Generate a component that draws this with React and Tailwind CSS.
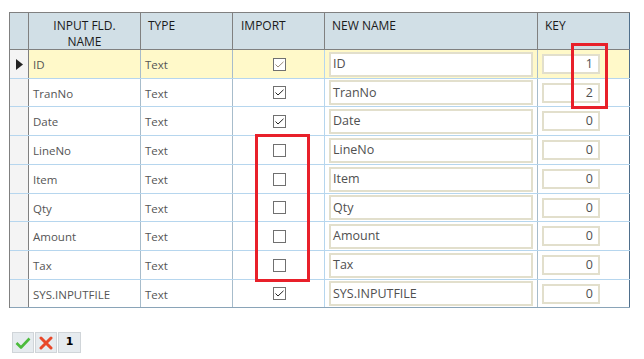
import React from "react";

const rows = [
  { name: "ID", imp: true, key: "1", h: "h-[29px]", sel: true },
  { name: "TranNo", imp: true, key: "2", h: "h-[28px]" },
  { name: "Date", imp: true, key: "0", h: "h-[29px]" },
  { name: "LineNo", imp: false, key: "0", h: "h-[29px]" },
  { name: "Item", imp: false, key: "0", h: "h-[29px]" },
  { name: "Qty", imp: false, key: "0", h: "h-[28px]" },
  { name: "Amount", imp: false, key: "0", h: "h-[29px]" },
  { name: "Tax", imp: false, key: "0", h: "h-[29px]" },
  { name: "SYS.INPUTFILE", imp: true, key: "0", h: "h-[28px]" },
];

function Check({ on, light }) {
  return (
    <div className="w-[13px] h-[13px] border border-[#707070] bg-white flex items-center justify-center">
      {on && (
        <svg width="9" height="7" viewBox="0 0 9 7">
          <path d="M0.5 3.5 L3 6 L8.5 0.8" fill="none" stroke={light ? "#9a8c7a" : "#222"} strokeWidth="1" />
        </svg>
      )}
    </div>
  );
}

export default function App() {
  return (
    <div className="relative w-[644px] h-[359px] bg-white font-['Open_Sans','Noto_Sans',sans-serif] text-[11.5px]">
      <div className="pt-[12px] pl-[9px]">
        <div className="w-[621px] border-l border-[#808080]">
          {/* header */}
          <div className="flex h-[38px] bg-[#d1dfe6] border-t border-b border-[#808080] text-[#1a1a1a] text-[12px] leading-[16px]">
            <div className="w-[19px] border-r border-[#808080]" />
            <div className="w-[112px] border-r border-[#808080] text-center pt-[5px]">INPUT FLD.<br />NAME</div>
            <div className="w-[92px] border-r border-[#808080] pl-[7px] pt-[5px]">TYPE</div>
            <div className="w-[92px] border-r border-[#808080] pl-[8px] pt-[5px]">IMPORT</div>
            <div className="w-[213px] border-r border-[#808080] pl-[7px] pt-[5px]">NEW NAME</div>
            <div className="w-[92px] border-r border-[#4f6f8c] pl-[7px] pt-[5px]">KEY</div>
          </div>
          {rows.map((r, i) => (
            <div
              key={r.name}
              className={`flex ${r.h} border-b ${i === rows.length - 1 ? "border-[#8aa4b8]" : "border-[#b6d6ee]"} ${r.sel ? "bg-[#fff9c9]" : "bg-white"} text-[#555]`}
            >
              <div className="w-[19px] bg-[#f4f4f4] border-r border-[#808080] flex items-center justify-center">
                {r.sel && (
                  <svg width="7" height="11" viewBox="0 0 7 11">
                    <path d="M0 0 L7 5.5 L0 11 Z" fill="#222" />
                  </svg>
                )}
              </div>
              <div className="w-[112px] border-r border-[#a7bccb] flex items-center pl-[4px] pt-[2px]">{r.name}</div>
              <div className="w-[92px] border-r border-[#a7bccb] flex items-center pl-[4px] pt-[2px]">Text</div>
              <div className="w-[92px] border-r border-[#b6d6ee] flex items-center justify-center pl-[1px]">
                <Check on={r.imp} light={r.sel} />
              </div>
              <div className="w-[213px] border-r border-[#a7bccb] flex items-center pl-[4px]">
                <div className="w-[204px] h-[25px] bg-white border-2 border-[#e2dfcc] flex items-center pl-[2px] pt-[1px] text-[12.5px] text-[#505050]">
                  {r.name}
                </div>
              </div>
              <div className="w-[92px] border-r border-[#4f6f8c] flex items-center pl-[4px]">
                <div className="w-[58px] h-[20px] bg-white border-2 border-[#e2dfcc] flex items-center justify-end pr-[5px] pt-[1px] text-[12.5px] text-[#505050]">
                  {r.key}
                </div>
              </div>
            </div>
          ))}
        </div>
      </div>

      {/* footer buttons */}
      <div className="flex gap-[1px] pl-[12px] mt-[24px]">
        <div className="w-[22px] h-[21px] bg-[#e6ebef] border border-[#d0d5d9] flex items-center justify-center">
          <svg width="16" height="12" viewBox="0 0 16 12">
            <path d="M1.5 6 L6 10.5 L14.5 1.5" fill="none" stroke="#4cbb3c" strokeWidth="2.6" strokeLinejoin="round" />
          </svg>
        </div>
        <div className="w-[22px] h-[21px] bg-[#e6ebef] border border-[#d0d5d9] flex items-center justify-center">
          <svg width="14" height="14" viewBox="0 0 14 14">
            <path d="M2 2 L12 12 M12 2 L2 12" stroke="#e8482a" strokeWidth="3" strokeLinecap="round" />
          </svg>
        </div>
        <div className="w-[23px] h-[21px] bg-[#e6ebef] border border-[#d0d5d9] flex items-center justify-center text-[11px] font-bold text-black font-['DejaVu_Sans',sans-serif]">
          1
        </div>
      </div>

      {/* red highlight boxes */}
      <div className="absolute left-[255px] top-[134px] w-[55px] h-[148px] border-[3px] border-[#e8202a]" />
      <div className="absolute left-[571px] top-[43px] w-[37px] h-[66px] border-[3px] border-[#e8202a]" />
    </div>
  );
}
